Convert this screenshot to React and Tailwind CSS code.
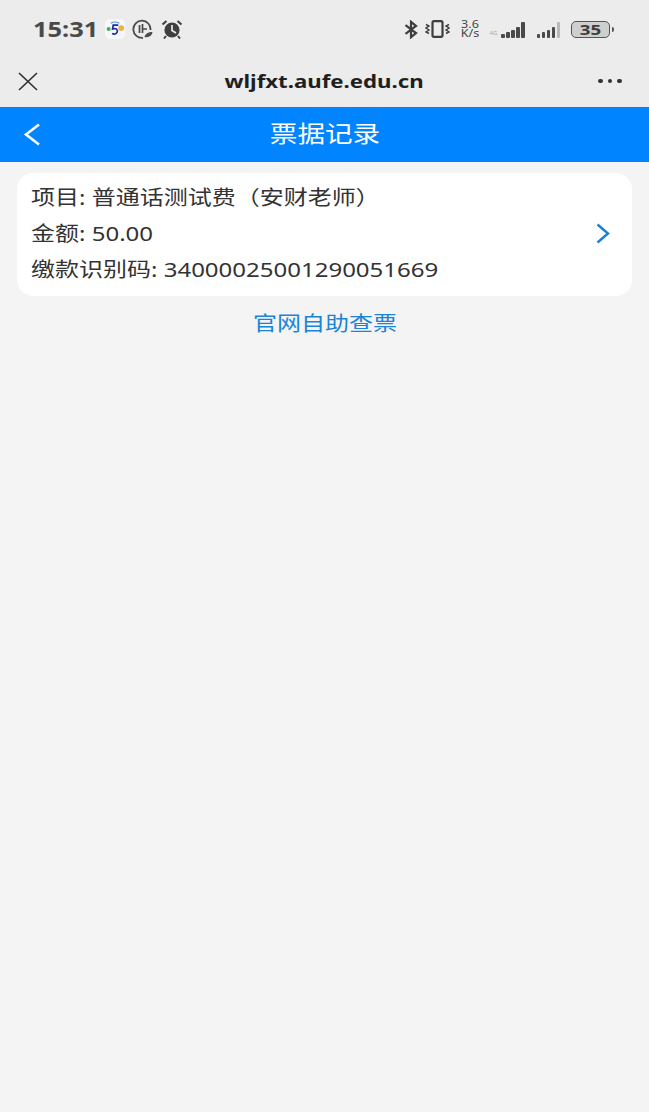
const cjk = { fontFamily: '"Noto Sans", "Noto Sans CJK SC", sans-serif' };

function AppIcon() {
  return (
    <svg width="20" height="20" viewBox="0 0 21 21">
      <rect width="21" height="21" rx="5" fill="#f7f7fb" />
      <circle cx="3.8" cy="10.5" r="2.2" fill="#3fb35a" />
      <circle cx="17" cy="9.5" r="3" fill="#e9b43c" />
      <path d="M6 4.5c3-1.8 6.5-1.5 9 0" stroke="#5a8fd8" strokeWidth="1.2" fill="none" />
      <path d="M14 6.5H8.6L8 10.5c2.5-1 5-.5 5 2.2 0 2.8-3 3.8-5.5 2.6" stroke="#1a2aa8" strokeWidth="1.8" fill="none" />
    </svg>
  );
}

function HdClock() {
  return (
    <svg width="21" height="20" viewBox="0 0 21 20" fill="none" stroke="#4a4a4a">
      <path d="M18.5 11A8.6 8.6 0 1 0 11 18.8" strokeWidth="1.8" />
      <path d="M7.5 6v8M10.5 5v9M10.5 10h4.5" strokeWidth="1.7" />
      <path d="M12.5 18c1-3.5 3.5-5 8-5-.5 3.5-3.5 6-8 5z" fill="#4a4a4a" stroke="none" />
    </svg>
  );
}

function Alarm() {
  return (
    <svg width="22" height="20" viewBox="0 0 22 20">
      <circle cx="11" cy="11" r="7.6" fill="#3f3f3f" />
      <path d="M11 6v5.5l4 2.5" stroke="#ececec" strokeWidth="1.7" fill="none" />
      <path d="M1.5 5.5 5.5 2M20.5 5.5 16.5 2M5 17l-2 2.5M17 17l2 2.5" stroke="#3f3f3f" strokeWidth="2" fill="none" />
    </svg>
  );
}

function Bluetooth() {
  return (
    <svg width="14" height="19" viewBox="0 0 14 19" fill="none" stroke="#3d3d3d" strokeWidth="2.2">
      <path d="M1.5 5.2 12 13 7 17.2V1.8L12 6 1.5 13.8" />
    </svg>
  );
}

function Vibrate() {
  return (
    <svg width="25" height="18" viewBox="0 0 25 18" fill="none" stroke="#3d3d3d">
      <rect x="7.5" y="1.2" width="10" height="15.6" rx="1.5" strokeWidth="2.2" />
      <path d="M1 4.5l3 1.5-3 2 3 2-3 2 3 1.5M24 4.5l-3 1.5 3 2-3 2 3 2-3 1.5" strokeWidth="1.4" />
    </svg>
  );
}

function Signal({ heights, faded }) {
  return (
    <div className="flex items-end gap-[1.5px] h-[17px]">
      {heights.map((h, i) => (
        <div
          key={i}
          className={`w-[3.5px] rounded-[1px] ${faded && i === heights.length - 1 ? 'bg-[#b9b9b9]' : 'bg-[#4a4a4a]'}`}
          style={{ height: h }}
        />
      ))}
    </div>
  );
}

function StatusBar() {
  return (
    <div className="h-[58px] flex items-center justify-between pl-[33px] pr-[35px]">
      <div className="flex items-center">
        <div className="w-[72px]">
          <span className="block origin-left scale-x-[1.24] text-[20.5px] font-bold text-[#4a4a4a]">15:31</span>
        </div>
        <AppIcon />
        <div className="ml-[7px]"><HdClock /></div>
        <div className="ml-[8px]"><Alarm /></div>
      </div>
      <div className="flex items-center">
        <Bluetooth />
        <div className="ml-[7px]"><Vibrate /></div>
        <div className="ml-[10px] w-[20px] text-[10.5px] leading-[9px] text-center text-[#444]">
          <div className="scale-x-[1.2]">3.6</div>
          <div className="scale-x-[1.2]">K/s</div>
        </div>
        <div className="ml-[10px] flex items-end h-[17px] w-[35px] justify-between">
          <span className="text-[6px] leading-[9px] text-[#aaa]">4G</span>
          <Signal heights={[4, 6, 8, 11, 16]} />
        </div>
        <div className="ml-[12px]"><Signal heights={[4, 6, 8, 11, 16]} faded /></div>
        <div className="ml-[11px] flex items-center">
          <div className="w-[39px] h-[17px] rounded-[5px] border-[1.5px] border-[#555] bg-[#cfcfcf] flex items-center justify-center text-[#3d3d3d]">
            <span className="scale-x-[1.25] text-[15px] leading-[15px] font-bold">35</span>
          </div>
          <div className="w-[2px] h-[5px] bg-[#555] ml-[2px] rounded-r-sm" />
        </div>
      </div>
    </div>
  );
}

function CardLine({ children }) {
  return <div className="origin-left scale-x-[1.2] whitespace-nowrap">{children}</div>;
}

export default function App() {
  return (
    <div className="min-h-[1112px] bg-[#f4f4f4]" style={cjk}>
      <div className="bg-[#ececec]">
        <StatusBar />
        <div className="h-[49px] pb-[3px] flex items-center justify-between pl-[18px] pr-[27px]">
          <svg width="20" height="19" viewBox="0 0 20 19" fill="none" stroke="#333" strokeWidth="1.7">
            <path d="M1 1l18 17M19 1 1 18" />
          </svg>
          <div className="ml-[12px] origin-center scale-x-[1.2] text-[18.5px] font-bold text-[#1f1f1f]">wljfxt.aufe.edu.cn</div>
          <div className="flex gap-[5px]">
            <div className="w-[4.5px] h-[4.5px] rounded-full bg-[#333]" />
            <div className="w-[4.5px] h-[4.5px] rounded-full bg-[#333]" />
            <div className="w-[4.5px] h-[4.5px] rounded-full bg-[#333]" />
          </div>
        </div>
      </div>

      <div className="h-[55px] bg-[#0084ff] flex items-center relative justify-center">
        <svg width="18" height="23" viewBox="0 0 18 23" fill="none" stroke="#fff" strokeWidth="2.6" className="absolute left-[23px]">
          <path d="M16 1.5 3 11.5l13 10" />
        </svg>
        <span className="scale-x-[1.2] text-[23px] text-white mb-[3px]">票据记录</span>
      </div>

      <div className="px-[17px] pt-[11px]">
        <div className="h-[123px] pb-[2px] bg-white rounded-[16px] pl-[14px] pr-[22px] flex items-center justify-between">
          <div className="flex flex-col gap-[10px] text-[20px] leading-[26px] text-[#333]">
            <CardLine>项目: 普通话测试费（安财老师）</CardLine>
            <CardLine>金额: 50.00</CardLine>
            <CardLine>缴款识别码: 34000025001290051669</CardLine>
          </div>
          <svg width="14" height="21" viewBox="0 0 14 21" fill="none" stroke="#1a7fd4" strokeWidth="2.4">
            <path d="M1.5 1.5 12 10.5 1.5 19.5" />
          </svg>
        </div>
        <div className="mt-[14px] text-center">
          <span className="inline-block scale-x-[1.2] text-[20px] leading-[28px] text-[#1a84d8]">官网自助查票</span>
        </div>
      </div>
    </div>
  );
}
